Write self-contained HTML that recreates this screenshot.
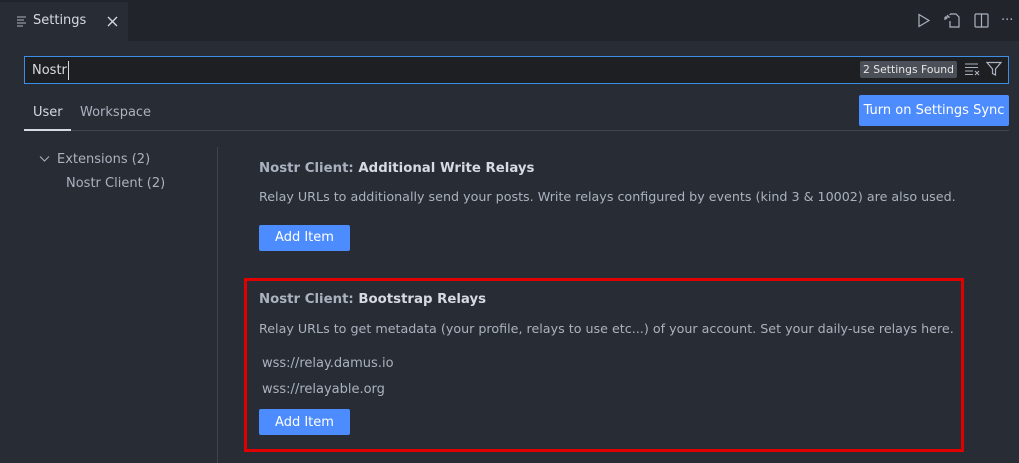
<!DOCTYPE html>
<html><head><style>
*{margin:0;padding:0;box-sizing:border-box}
body{width:1019px;height:463px;background:#282c34;font-family:"DejaVu Sans","Liberation Sans",sans-serif;color:#abb2bf;font-size:12.5px;position:relative;overflow:hidden}
.abs{position:absolute;white-space:nowrap}
.bar{position:absolute;left:0;top:0;width:1019px;height:41px;background:#21252b}
.tab{position:absolute;left:0;top:2px;width:128px;height:39px;background:#282c34;color:#d7dae0;font-size:13px}
.btn{position:absolute;background:#4d8cff;color:#fff;border-radius:2px;text-align:center}
</style></head><body>
<div class="bar"></div>
<div class="tab">
 <svg class="abs" style="left:16px;top:13px" width="12" height="12"><path d="M1 2h9M1 5h7M1 8h9M1 11h6" stroke="#abb2bf" stroke-width="1"/></svg>
 <span class="abs" style="left:33px;top:11px">Settings</span>
 <svg class="abs" style="left:107px;top:14px" width="11" height="11"><path d="M1 1L10 10M10 1L1 10" stroke="#d7dae0" stroke-width="1.3"/></svg>
</div>
<svg class="abs" style="left:917px;top:13px" width="14" height="15"><path d="M2 1.5L12 7.5L2 13.5Z" fill="none" stroke="#abb2bf" stroke-width="1.2"/></svg>
<svg class="abs" style="left:944px;top:11px" width="18" height="18"><path d="M6 3h6l3 3v10H6V10M6 3v1M1 6h4l-2-2M1 6l2 2M1 6v3" fill="none" stroke="#abb2bf" stroke-width="1.2"/></svg>
<svg class="abs" style="left:974px;top:13px" width="15" height="15"><rect x="1" y="1" width="13" height="13" rx="1" fill="none" stroke="#abb2bf" stroke-width="1.2"/><path d="M7.5 1v13" stroke="#abb2bf" stroke-width="1.2"/></svg>
<span class="abs" style="left:1001px;top:13px;font-size:13px">···</span>

<div class="abs" style="left:24px;top:56px;width:985px;height:28px;background:#1d1f23;border:1px solid #3a8ee6"></div>
<span class="abs" style="left:32px;top:63px;color:#d7dae0;font-size:13px">Nostr</span>
<div class="abs" style="left:68px;top:61px;width:1px;height:19px;background:#d7dae0"></div>
<div class="abs" style="left:860px;top:61px;width:97px;height:17px;background:#4b4f57;border-radius:2px;color:#e6e6e6;font-size:10.8px;line-height:17px;text-align:center">2 Settings Found</div>
<svg class="abs" style="left:964px;top:62px" width="18" height="14"><path d="M1 2h13M1 5.5h13M1 9h8M1 12.5h8M11 9l4 4M15 9l-4 4" stroke="#abb2bf" stroke-width="1.1"/></svg>
<svg class="abs" style="left:986px;top:61px" width="16" height="16"><path d="M1 1.5h14L9.5 8v6l-3-1.5V8Z" fill="none" stroke="#abb2bf" stroke-width="1.2"/></svg>

<span class="abs" style="left:33px;top:105px;color:#d7dae0;font-size:13px">User</span>
<span class="abs" style="left:80px;top:105px;color:#abb2bf;font-size:13px">Workspace</span>
<div class="abs" style="left:24px;top:130px;width:985px;height:1px;background:#3e4451"></div>
<div class="abs" style="left:24px;top:129px;width:47px;height:2px;background:#d7dae0"></div>
<div class="btn" style="left:859px;top:95px;width:150px;height:31px;line-height:31px;font-size:13px">Turn on Settings Sync</div>

<svg class="abs" style="left:39px;top:155px" width="11" height="8"><path d="M1 1.5l4.5 4.5 4.5-4.5" fill="none" stroke="#abb2bf" stroke-width="1.1"/></svg>
<span class="abs" style="left:57px;top:152px;font-size:13px">Extensions (2)</span>
<span class="abs" style="left:66px;top:176px;font-size:13px">Nostr Client (2)</span>
<div class="abs" style="left:217px;top:147px;width:1px;height:316px;background:#3e4451"></div>

<span class="abs" style="left:259px;top:161px;font-size:13.3px;font-weight:bold;color:#abb2bf">Nostr Client: <span style="color:#d7dae0">Additional Write Relays</span></span>
<span class="abs" style="left:259px;top:189px;font-size:12.7px">Relay URLs to additionally send your posts. Write relays configured by events (kind 3 &amp; 10002) are also used.</span>
<div class="btn" style="left:259px;top:225px;width:91px;height:26px;line-height:26px;font-size:13px">Add Item</div>

<div class="abs" style="left:244px;top:278px;width:720px;height:174px;border:3px solid #e00000"></div>
<span class="abs" style="left:259px;top:292px;font-size:13.3px;font-weight:bold;color:#abb2bf">Nostr Client: <span style="color:#d7dae0">Bootstrap Relays</span></span>
<span class="abs" style="left:259px;top:321px;font-size:12.7px">Relay URLs to get metadata (your profile, relays to use etc...) of your account. Set your daily-use relays here.</span>
<span class="abs" style="left:262px;top:356px;font-size:13px">wss://relay.damus.io</span>
<span class="abs" style="left:262px;top:382px;font-size:13px">wss://relayable.org</span>
<div class="btn" style="left:259px;top:409px;width:91px;height:26px;line-height:27px;font-size:13px">Add Item</div>
</body></html>
